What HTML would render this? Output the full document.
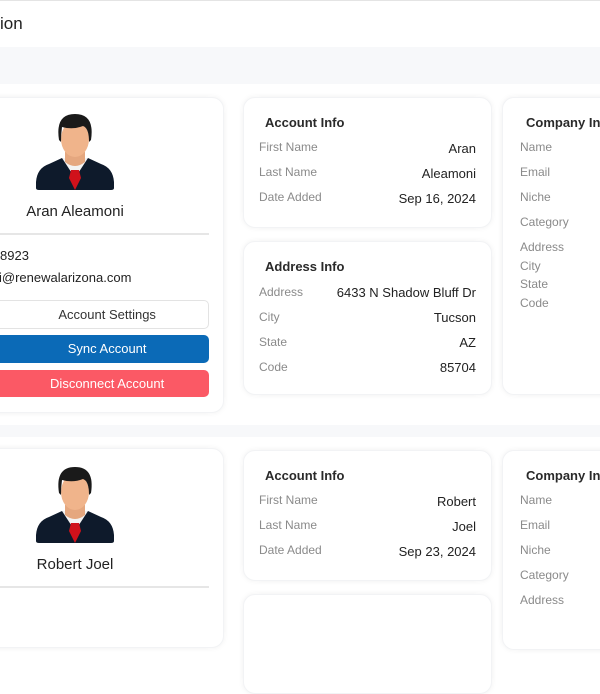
<!DOCTYPE html>
<html><head><style>
*{box-sizing:border-box;margin:0;padding:0}
body{width:600px;height:600px;overflow:hidden;background:#fff;font-family:"Liberation Sans",sans-serif;position:relative;color:#222}
.abs{position:absolute}
.card{position:absolute;background:#fff;border-radius:12px;box-shadow:0 0 6px rgba(0,0,0,0.06);border:1px solid #f2f3f5}
.h{position:absolute;font-size:13px;font-weight:bold;color:#2a2a2a}
.l{position:absolute;font-size:12px;color:#8a8a8a}
.v{position:absolute;font-size:13px;color:#222;text-align:right}
.btn{position:absolute;left:-20px;width:229px;border-radius:5px;font-size:13px;text-align:center}
</style></head><body>
<div class="abs" style="left:0;top:0;width:600px;height:1px;background:#e4e4e4"></div>
<div class="abs" style="left:0;top:14px;font-size:17px;color:#222">ion</div>
<div class="abs" style="left:0;top:47px;width:600px;height:37px;background:#f7f8fa"></div>
<div class="abs" style="left:0;top:425px;width:600px;height:12px;background:#f7f8fa"></div>

<div class="card" style="left:-20px;top:97px;width:244px;height:316px"></div>
<svg class="abs" style="left:35px;top:112px" width="80" height="80" viewBox="0 0 80 80">
<path d="M1 70 Q2 56 14 52 L27 46 L53 46 L66 52 Q78 56 79 70 L79 76 Q79 78 76 78 L4 78 Q1 78 1 76Z" fill="#0e1a2b"/>
<path d="M27 46 L40 66 L53 46Z" fill="#f3f3f3"/>
<path d="M30 40 L30 50 Q40 58 50 50 L50 40Z" fill="#e5a77f"/>
<ellipse cx="40" cy="27" rx="14" ry="18" fill="#f0b48b"/>
<path d="M24 28 Q20 2 40 2 Q60 2 56 28 L54 30 Q54 16 48 14 Q38 18 27 15 Q26 22 26 30Z" fill="#1a1a1a"/>
<path d="M36 58 L44 58 L46 66 L40 78 L34 66Z" fill="#d0111b"/>
</svg>
<div class="abs" style="left:0;top:203px;width:150px;text-align:center;font-size:15px;color:#222">Aran Aleamoni</div>
<div class="abs" style="left:0;top:233px;width:209px;height:2px;background:#e6e6e6"></div>
<div class="abs" style="left:0;top:248px;font-size:13px">8923</div>
<div class="abs" style="left:-1px;top:270px;font-size:13px">i@renewalarizona.com</div>
<div class="btn" style="top:300px;height:29px;line-height:28px;border:1px solid #e3e3e3;color:#333">&nbsp;&nbsp;&nbsp;&nbsp;&nbsp;&nbsp;&nbsp;Account Settings</div>
<div class="btn" style="top:335px;height:28px;line-height:28px;background:#0b6ab7;color:#fff">&nbsp;&nbsp;&nbsp;&nbsp;&nbsp;&nbsp;&nbsp;Sync Account</div>
<div class="btn" style="top:370px;height:27px;line-height:27px;background:#fb5965;color:#fff">&nbsp;&nbsp;&nbsp;&nbsp;&nbsp;&nbsp;&nbsp;Disconnect Account</div>

<div class="card" style="left:243px;top:97px;width:249px;height:131px">
<div class="h" style="left:21px;top:17px">Account Info</div>
<div class="l" style="left:15px;top:42px">First Name</div><div class="v" style="right:15px;top:43px">Aran</div>
<div class="l" style="left:15px;top:67px">Last Name</div><div class="v" style="right:15px;top:68px">Aleamoni</div>
<div class="l" style="left:15px;top:92px">Date Added</div><div class="v" style="right:15px;top:93px">Sep 16, 2024</div>
</div>
<div class="card" style="left:243px;top:241px;width:249px;height:154px">
<div class="h" style="left:21px;top:17px">Address Info</div>
<div class="l" style="left:15px;top:43px">Address</div><div class="v" style="right:15px;top:43px">6433 N Shadow Bluff Dr</div>
<div class="l" style="left:15px;top:68px">City</div><div class="v" style="right:15px;top:68px">Tucson</div>
<div class="l" style="left:15px;top:93px">State</div><div class="v" style="right:15px;top:93px">AZ</div>
<div class="l" style="left:15px;top:118px">Code</div><div class="v" style="right:15px;top:118px">85704</div>
</div>
<div class="card" style="left:502px;top:97px;width:140px;height:298px">
<div class="h" style="left:23px;top:17px">Company Info</div>
<div class="l" style="left:17px;top:42px">Name</div>
<div class="l" style="left:17px;top:67px">Email</div>
<div class="l" style="left:17px;top:92px">Niche</div>
<div class="l" style="left:17px;top:117px">Category</div>
<div class="l" style="left:17px;top:142px">Address</div>
<div class="l" style="left:17px;top:161px">City</div>
<div class="l" style="left:17px;top:179px">State</div>
<div class="l" style="left:17px;top:198px">Code</div>
</div>

<div class="card" style="left:-20px;top:448px;width:244px;height:200px"></div>
<svg class="abs" style="left:35px;top:465px" width="80" height="80" viewBox="0 0 80 80">
<path d="M1 70 Q2 56 14 52 L27 46 L53 46 L66 52 Q78 56 79 70 L79 76 Q79 78 76 78 L4 78 Q1 78 1 76Z" fill="#0e1a2b"/>
<path d="M27 46 L40 66 L53 46Z" fill="#f3f3f3"/>
<path d="M30 40 L30 50 Q40 58 50 50 L50 40Z" fill="#e5a77f"/>
<ellipse cx="40" cy="27" rx="14" ry="18" fill="#f0b48b"/>
<path d="M24 28 Q20 2 40 2 Q60 2 56 28 L54 30 Q54 16 48 14 Q38 18 27 15 Q26 22 26 30Z" fill="#1a1a1a"/>
<path d="M36 58 L44 58 L46 66 L40 78 L34 66Z" fill="#d0111b"/>
</svg>
<div class="abs" style="left:0;top:556px;width:150px;text-align:center;font-size:15px;color:#222">Robert Joel</div>
<div class="abs" style="left:0;top:586px;width:209px;height:2px;background:#e6e6e6"></div>

<div class="card" style="left:243px;top:450px;width:249px;height:131px">
<div class="h" style="left:21px;top:17px">Account Info</div>
<div class="l" style="left:15px;top:42px">First Name</div><div class="v" style="right:15px;top:43px">Robert</div>
<div class="l" style="left:15px;top:67px">Last Name</div><div class="v" style="right:15px;top:68px">Joel</div>
<div class="l" style="left:15px;top:92px">Date Added</div><div class="v" style="right:15px;top:93px">Sep 23, 2024</div>
</div>
<div class="card" style="left:243px;top:594px;width:249px;height:100px"></div>
<div class="card" style="left:502px;top:450px;width:140px;height:200px">
<div class="h" style="left:23px;top:17px">Company Info</div>
<div class="l" style="left:17px;top:42px">Name</div>
<div class="l" style="left:17px;top:67px">Email</div>
<div class="l" style="left:17px;top:92px">Niche</div>
<div class="l" style="left:17px;top:117px">Category</div>
<div class="l" style="left:17px;top:142px">Address</div>
</div>
</body></html>
